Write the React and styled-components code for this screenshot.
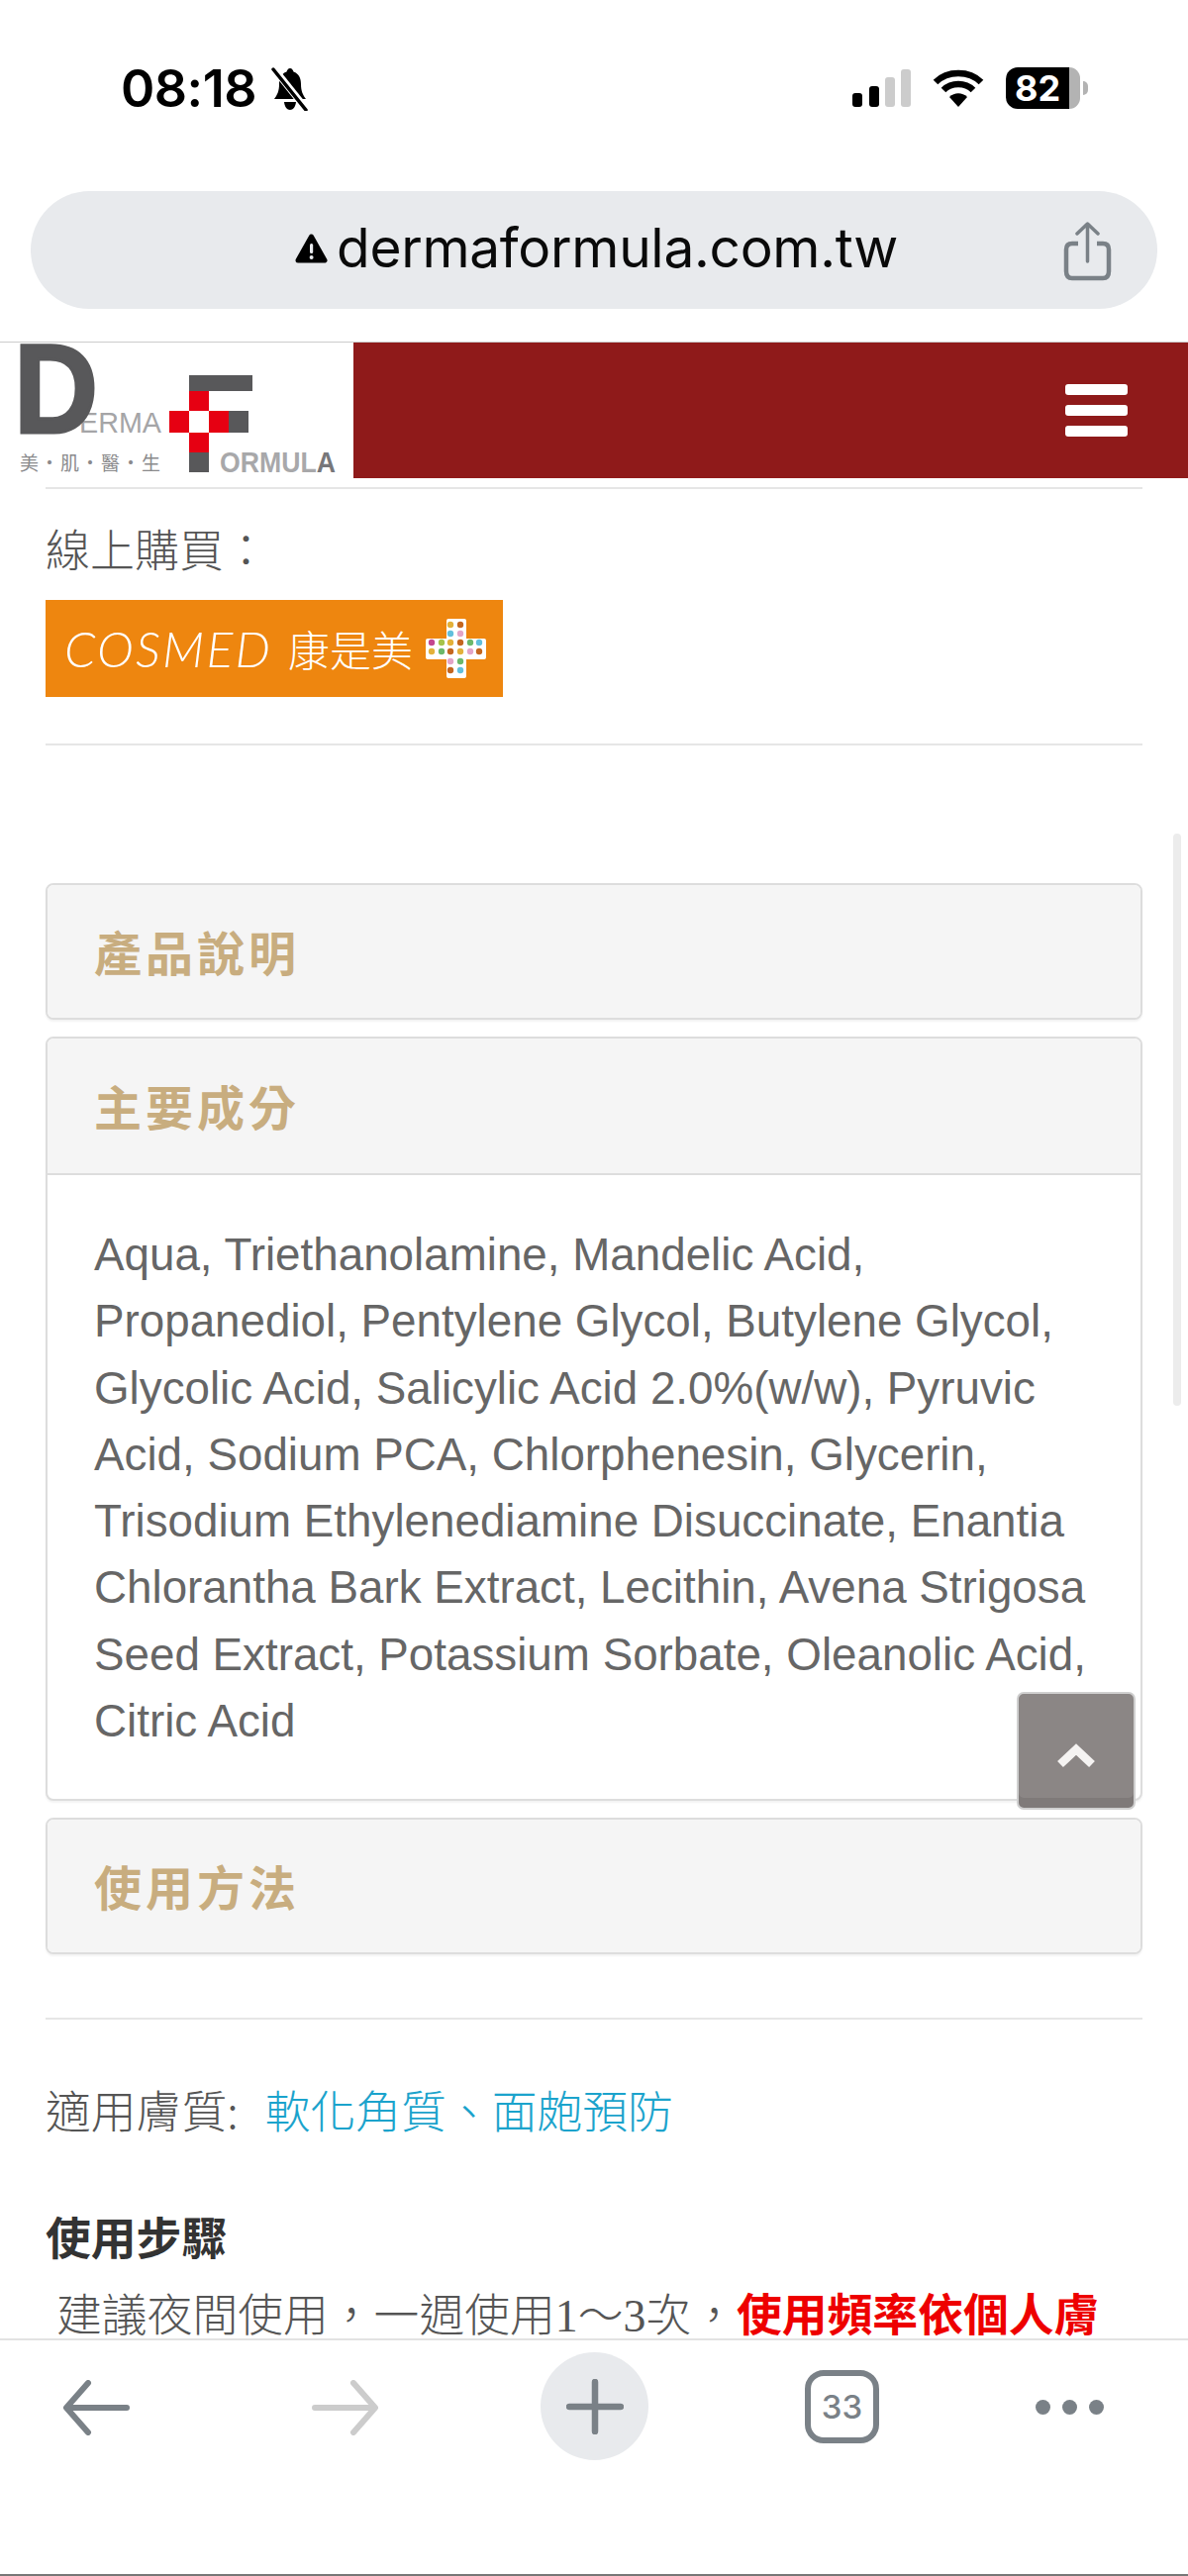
import React from 'react';
import styled, { createGlobalStyle } from 'styled-components';

const cjk = `"Noto Sans CJK TC", "Noto Sans CJK SC", sans-serif`;
const body = `"Liberation Sans", "Noto Sans CJK TC", sans-serif`;

const GlobalStyle = createGlobalStyle`
    html, body {
        margin: 0;
        padding: 0;
        background: #fff;
    }
`;

const ingredients = 'Aqua, Triethanolamine, Mandelic Acid, Propanediol, Pentylene Glycol, Butylene Glycol, Glycolic Acid, Salicylic Acid 2.0%(w/w), Pyruvic Acid, Sodium PCA, Chlorphenesin, Glycerin, Trisodium Ethylenediamine Disuccinate, Enantia Chlorantha Bark Extract, Lecithin, Avena Strigosa Seed Extract, Potassium Sorbate, Oleanolic Acid, Citric Acid';

const dotRows = [
    { y: 6, xs: [25, 35], colors: ['#e3b13a', '#c4661f'] },
    { y: 15, xs: [25, 35], colors: ['#62bfdc', '#e3a5c8'] },
    { y: 24, xs: [6, 16, 25, 35, 45, 54], colors: ['#c4478f', '#a6c34a', '#e3b13a', '#c4661f', '#6cb86a', '#62bfdc'] },
    { y: 33, xs: [6, 16, 25, 35, 45, 54], colors: ['#e3b13a', '#6cb86a', '#c4661f', '#e3b13a', '#e3a5c8', '#c4661f'] },
    { y: 43, xs: [25, 35], colors: ['#e3a5c8', '#6cb86a'] },
    { y: 52, xs: [25, 35], colors: ['#c4661f', '#62bfdc'] },
];

const Logo = () => (
    <LogoSvg viewBox="0 0 357 138">
        <text x="80" y="91" fontFamily="Liberation Sans" fontSize="30" fill="#a5a5a7" textLength="83" lengthAdjust="spacingAndGlyphs">ERMA</text>
        <text x="14" y="91" fontFamily="Liberation Sans" fontWeight="700" fontSize="128" fill="#58585a" stroke="#58585a" strokeWidth="3" textLength="85" lengthAdjust="spacingAndGlyphs">D</text>
        <rect x="191" y="33" width="64" height="16" fill="#58585a" />
        <rect x="231" y="69" width="20" height="22" fill="#58585a" />
        <rect x="191" y="111" width="20" height="20" fill="#58585a" />
        <rect x="171" y="69" width="60" height="22" fill="#e60012" />
        <rect x="191" y="49" width="20" height="62" fill="#e60012" />
        <rect x="191" y="69" width="20" height="22" fill="#fff" />
        <text x="20" y="129" fontFamily="Noto Sans CJK TC" fontSize="19" fill="#8a8a8c" textLength="142">美 · 肌 · 醫 · 生</text>
        <text x="222" y="131" fontFamily="Liberation Sans" fontWeight="700" fontSize="29" fill="#a8a8aa" textLength="117" lengthAdjust="spacingAndGlyphs">ORMUL<tspan fill="#77777a">A</tspan></text>
    </LogoSvg>
);

const CosmedCross = () => (
    <CrossSvg viewBox="0 0 61 60">
        <path d="M21 2 Q21 0 23 0 H39 Q41 0 41 2 V20 H59 Q61 20 61 22 V39 Q61 41 59 41 H41 V58 Q41 60 39 60 H23 Q21 60 21 58 V41 H2 Q0 41 0 39 V22 Q0 20 2 20 H21 Z" fill="#fff" />
        {dotRows.map((row) => row.xs.map((x, i) => (
            <circle key={`${row.y}-${x}`} cx={x} cy={row.y} r="3.2" fill={row.colors[i]} />
        )))}
    </CrossSvg>
);

const App = () => {
    return (
        <Page>
            <GlobalStyle />
            <StatusBar>
                <Clock>
                    <Time>08:18</Time>
                    <svg width="40" height="44" viewBox="0 0 40 44">
                        <path d="M20 1 C22 1 23 3 23.5 4.5 C29 6.5 31 11 31 17 C31 24 33 28 36 32 H4 C7 28 9 24 9 17 C9 11 11 6.5 16.5 4.5 C17 3 18 1 20 1 Z M14 35 H26 C25.5 40 23 43 20 43 C17 43 14.5 40 14 35 Z" fill="#000" />
                        <line x1="5" y1="3" x2="37" y2="43" stroke="#fff" strokeWidth="7" />
                        <line x1="3" y1="2" x2="36" y2="43" stroke="#000" strokeWidth="3.5" strokeLinecap="round" />
                    </svg>
                </Clock>
                <StatusIcons>
                    <svg width="59" height="38" viewBox="0 0 59 38">
                        <rect x="0" y="24" width="10" height="14" rx="3" fill="#000" />
                        <rect x="17" y="17" width="10" height="21" rx="3" fill="#000" />
                        <rect x="33" y="8" width="10" height="30" rx="3" fill="#ccc" />
                        <rect x="49" y="0" width="10" height="38" rx="3" fill="#ccc" />
                    </svg>
                    <svg width="52" height="38" viewBox="0 0 52 38">
                        <path d="M3 13 C15 1 37 1 49 13 M11 21 C19 13 33 13 41 21" fill="none" stroke="#000" strokeWidth="6.5" />
                        <path d="M26 38 L17 28 C22 23 30 23 35 28 Z" fill="#000" />
                    </svg>
                    <Battery>
                        <BatteryLevel>82</BatteryLevel>
                        <BatteryRest />
                        <BatteryNub />
                    </Battery>
                </StatusIcons>
            </StatusBar>
            <UrlBar>
                <UrlCenter>
                    <svg width="33" height="30" viewBox="0 0 33 30">
                        <path d="M16.5 3 L30 27 H3 Z" fill="#000" stroke="#000" strokeWidth="5" strokeLinejoin="round" />
                        <rect x="15" y="10" width="3.2" height="10" rx="1.5" fill="#e8eaed" />
                        <circle cx="16.6" cy="24" r="2" fill="#e8eaed" />
                    </svg>
                    <UrlText>dermaformula.com.tw</UrlText>
                </UrlCenter>
                <ShareIcon width="49" height="60" viewBox="0 0 49 60">
                    <path d="M15 22 H9 Q3 22 3 28 V50 Q3 57 9 57 H40 Q46 57 46 50 V28 Q46 22 40 22 H34" fill="none" stroke="#7a8187" strokeWidth="4.5" />
                    <path d="M24.5 40 V3 M14 12 L24.5 2 L35 12" fill="none" stroke="#7a8187" strokeWidth="3.5" strokeLinecap="round" strokeLinejoin="round" />
                </ShareIcon>
            </UrlBar>
            <SiteHeader>
                <LogoBox><Logo /></LogoBox>
                <HeaderBand>
                    <Burger><span /><span /><span /></Burger>
                </HeaderBand>
            </SiteHeader>
            <Content>
                <Divider $top={9} />
                <BuyLabel>線上購買：</BuyLabel>
                <CosmedBanner>
                    <CosmedName>COSMED</CosmedName>
                    <CosmedCn>康是美</CosmedCn>
                    <CosmedCross />
                </CosmedBanner>
                <Divider $top={47} />
                <Panels>
                    <Panel>
                        <PanelHeading>產品說明</PanelHeading>
                    </Panel>
                    <Panel>
                        <PanelHeading $open>主要成分</PanelHeading>
                        <PanelBody>{ingredients}</PanelBody>
                    </Panel>
                    <Panel>
                        <PanelHeading>使用方法</PanelHeading>
                    </Panel>
                </Panels>
                <Divider $top={64} />
                <SkinLine>適用膚質:<SkinLink>軟化角質、面皰預防</SkinLink></SkinLine>
                <StepsTitle>使用步驟</StepsTitle>
                <StepsText>
                    建議夜間使用，一週使用<Num>1</Num>～<Num>3</Num>次，<Warn>使用頻率依個人膚</Warn>
                </StepsText>
                <ScrollThumb />
                <BackToTop>
                    <svg width="42" height="26" viewBox="0 0 42 26">
                        <path d="M5 21 L21 6 L37 21" fill="none" stroke="#f5f3f2" strokeWidth="8.5" />
                    </svg>
                </BackToTop>
            </Content>
            <Toolbar>
                <svg width="68" height="56" viewBox="0 0 68 56">
                    <path d="M65 28 H5 M26 3 L4 28 L26 53" fill="none" stroke="#7a8187" strokeWidth="6" strokeLinecap="round" strokeLinejoin="round" />
                </svg>
                <svg width="68" height="56" viewBox="0 0 68 56">
                    <path d="M3 28 H63 M42 3 L64 28 L42 53" fill="none" stroke="#cccccc" strokeWidth="6" strokeLinecap="round" strokeLinejoin="round" />
                </svg>
                <NewTab>
                    <svg width="58" height="56" viewBox="0 0 58 56">
                        <path d="M3 28 H55 M29 3 V53" fill="none" stroke="#7a8187" strokeWidth="6.5" strokeLinecap="round" />
                    </svg>
                </NewTab>
                <TabCount>33</TabCount>
                <MoreDots><i /><i /><i /></MoreDots>
            </Toolbar>
        </Page>
    );
};

const Page = styled.div`
    position: relative;
    width: 1200px;
    height: 2602px;
    overflow: hidden;
    display: flex;
    flex-direction: column;
    background: #fff;
`;

const StatusBar = styled.div`
    height: 193px;
    flex-shrink: 0;
    box-sizing: border-box;
    padding: 68px 101px 0 122px;
    display: flex;
    justify-content: space-between;
    align-items: flex-start;
`;

const Clock = styled.div`
    display: flex;
    align-items: center;
    gap: 14px;
    height: 44px;
`;

const Time = styled.span`
    font-family: Inter, sans-serif;
    font-size: 52px;
    font-weight: 600;
    letter-spacing: -0.5px;
    line-height: 44px;
    color: #000;
`;

const StatusIcons = styled.div`
    display: flex;
    align-items: center;
    height: 42px;
    gap: 22px;
`;

const Battery = styled.div`
    display: flex;
    align-items: center;
    height: 42px;
`;

const BatteryLevel = styled.div`
    width: 64px;
    height: 42px;
    box-sizing: border-box;
    padding-left: 9px;
    background: #000;
    border-radius: 12px 0 0 12px;
    color: #fff;
    font-family: Inter, sans-serif;
    font-size: 36px;
    font-weight: 700;
    line-height: 42px;
`;

const BatteryRest = styled.div`
    width: 11px;
    height: 42px;
    background: #b3b3b3;
    border-radius: 0 12px 12px 0;
`;

const BatteryNub = styled.div`
    width: 5px;
    height: 14px;
    margin-left: 3px;
    background: #b3b3b3;
    border-radius: 0 5px 5px 0;
`;

const UrlBar = styled.div`
    position: relative;
    flex-shrink: 0;
    height: 119px;
    margin: 0 31px 33px;
    border-radius: 60px;
    background: #e8eaed;
`;

const UrlCenter = styled.div`
    height: 100%;
    box-sizing: border-box;
    padding: 0 0 4px 267px;
    display: flex;
    align-items: center;
    gap: 9px;
`;

const UrlText = styled.span`
    font-family: Inter, sans-serif;
    font-size: 55px;
    color: #0a0a0a;
    letter-spacing: -0.3px;
    line-height: 1;
`;

const ShareIcon = styled.svg`
    position: absolute;
    top: 31px;
    right: 46px;
`;

const SiteHeader = styled.div`
    flex-shrink: 0;
    height: 138px;
    display: flex;
    border-top: 1px solid #ccc;
    box-sizing: border-box;
`;

const LogoBox = styled.div`
    width: 357px;
    flex-shrink: 0;
    background: #fff;
`;

const LogoSvg = styled.svg`
    display: block;
    width: 357px;
    height: 138px;
`;

const HeaderBand = styled.div`
    flex: 1;
    background: #8f1a1a;
    display: flex;
    align-items: center;
    justify-content: flex-end;
    padding-right: 61px;
`;

const Burger = styled.div`
    width: 63px;
    display: flex;
    flex-direction: column;
    gap: 10px;

    & span {
        display: block;
        height: 11px;
        border-radius: 3px;
        background: #fff;
    }
`;

const Content = styled.div`
    position: relative;
    flex: 1;
    min-height: 0;
    overflow: hidden;
    padding: 0 46px;
    font-family: ${cjk};
`;

const Divider = styled.div`
    height: 2px;
    margin-top: ${props => props.$top}px;
    background: #e6e6e6;
`;

const BuyLabel = styled.div`
    margin-top: 27px;
    height: 66px;
    line-height: 66px;
    font-size: 45px;
    font-weight: 300;
    color: #555;
    white-space: nowrap;
`;

const CosmedBanner = styled.div`
    margin-top: 19px;
    width: 462px;
    height: 98px;
    box-sizing: border-box;
    padding: 0 0 0 19px;
    background: #ee860f;
    display: flex;
    align-items: center;
`;

const CosmedName = styled.span`
    width: 210px;
    margin-right: 16px;
    font-family: Lato, sans-serif;
    font-style: italic;
    font-weight: 300;
    font-size: 50px;
    letter-spacing: 2.2px;
    color: #fff;
    line-height: 1;
    white-space: nowrap;
`;

const CosmedCn = styled.span`
    margin-right: 13px;
    font-family: ${cjk};
    font-weight: 300;
    font-size: 42px;
    color: #fff;
    line-height: 1;
`;

const CrossSvg = styled.svg`
    width: 61px;
    height: 60px;
`;

const Panels = styled.div`
    margin-top: 139px;
    display: flex;
    flex-direction: column;
    gap: 17px;
`;

const Panel = styled.div`
    border: 2px solid #ddd;
    border-radius: 8px;
    background: #fff;
    box-shadow: 0 2px 2px rgba(0, 0, 0, 0.05);
    overflow: hidden;
`;

const PanelHeading = styled.div`
    height: ${props => props.$open ? 138 : 134}px;
    padding: 0 47px 3px;
    box-sizing: border-box;
    display: flex;
    align-items: center;
    background: #f5f5f5;
    color: #c8ad7f;
    font-family: ${cjk};
    font-size: 48px;
    font-weight: 700;
    letter-spacing: 4px;
    border-bottom: ${props => props.$open ? '2px solid #ddd' : 'none'};
`;

const PanelBody = styled.div`
    padding: 47px 47px 45px;
    font-family: ${body};
    font-size: 45.75px;
    line-height: 67.3px;
    color: #666;
`;

const SkinLine = styled.div`
    margin-top: 57px;
    height: 66px;
    line-height: 66px;
    font-size: 45.8px;
    font-weight: 300;
    color: #555;
    white-space: nowrap;
`;

const SkinLink = styled.span`
    margin-left: 27px;
    color: #1ba3cc;
`;

const StepsTitle = styled.div`
    margin-top: 62px;
    height: 66px;
    line-height: 66px;
    font-size: 45.8px;
    font-weight: 700;
    color: #333;
`;

const StepsText = styled.div`
    margin-top: 11px;
    padding-left: 11px;
    line-height: 66px;
    font-size: 45.8px;
    font-weight: 300;
    color: #555;
    white-space: nowrap;
`;

const Num = styled.span`
    font-family: "Liberation Serif", serif;
`;

const Warn = styled.span`
    color: #ee0000;
    font-weight: 700;
`;

const ScrollThumb = styled.div`
    position: absolute;
    top: 359px;
    right: 7px;
    width: 8px;
    height: 578px;
    border-radius: 4px;
    background: #ececec;
`;

const BackToTop = styled.div`
    position: absolute;
    top: 1226px;
    left: 1027px;
    width: 120px;
    height: 119px;
    box-sizing: border-box;
    border: 2px solid #cfcfcf;
    border-radius: 7px;
    background: #8b8685;
    box-shadow: inset 0 -10px 0 #7f7a79;
    display: flex;
    align-items: flex-start;
    justify-content: center;
    padding-top: 50px;
`;

const Toolbar = styled.div`
    flex-shrink: 0;
    height: 240px;
    box-sizing: border-box;
    padding: 12px 0 0 63px;
    border-top: 2px solid #e2e2e2;
    border-bottom: 2px solid #777;
    background: #fff;
    display: grid;
    grid-template-columns: 252px 231px 267px 233px auto;
    align-items: start;

    & > svg {
        margin-top: 28px;
    }
`;

const NewTab = styled.div`
    width: 109px;
    height: 109px;
    border-radius: 50%;
    background: #e8eaed;
    display: flex;
    align-items: center;
    justify-content: center;
`;

const TabCount = styled.div`
    width: 75px;
    height: 74px;
    margin-top: 18px;
    box-sizing: border-box;
    border: 6px solid #7a8187;
    border-radius: 19px;
    color: #7a8187;
    font-family: Inter, sans-serif;
    font-size: 33px;
    font-weight: 500;
    display: flex;
    align-items: center;
    justify-content: center;
`;

const MoreDots = styled.div`
    margin-top: 48px;
    width: 69px;
    display: flex;
    justify-content: space-between;

    & i {
        display: block;
        width: 15px;
        height: 15px;
        border-radius: 50%;
        background: #7a8187;
    }
`;

export default App;
